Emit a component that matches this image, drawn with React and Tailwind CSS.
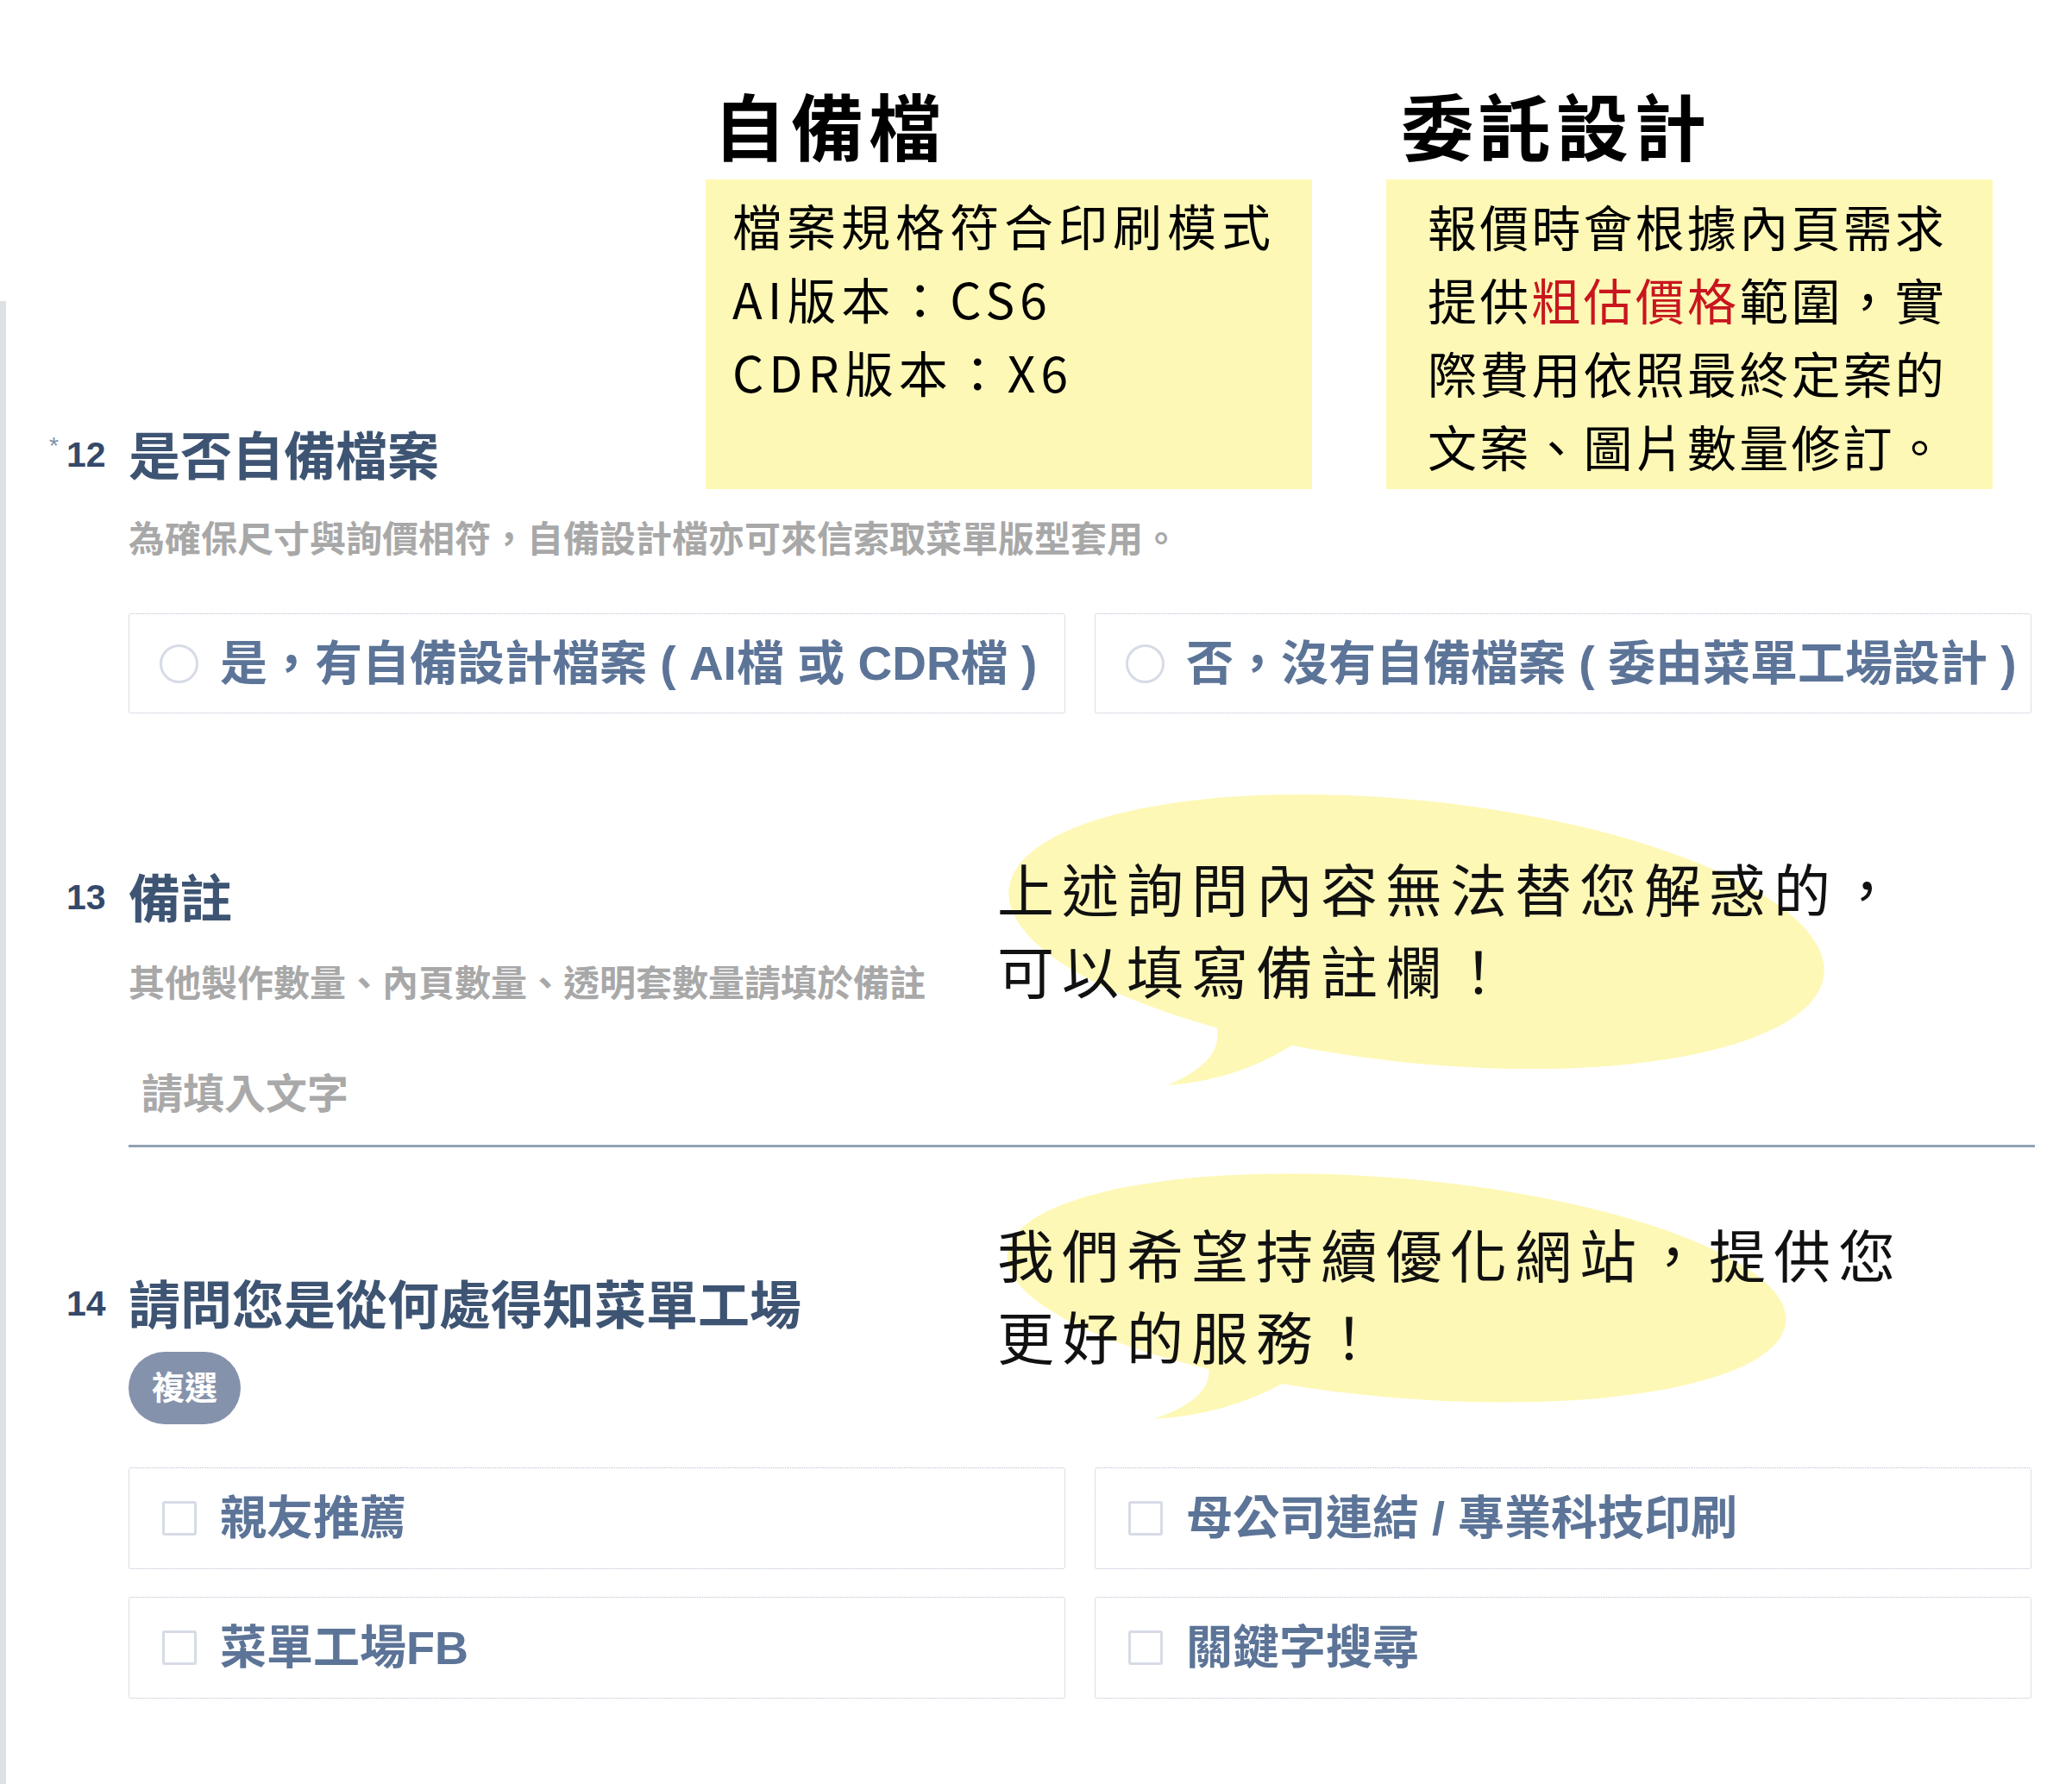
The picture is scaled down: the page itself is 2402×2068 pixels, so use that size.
import React from "react";

const formFont = "font-['Liberation_Sans','Noto_Sans_CJK_TC',sans-serif]";
const noteFont = "font-['Noto_Sans_CJK_TC','Noto_Sans_CJK_JP',sans-serif]";

function NumberCol({ n, required }) {
  return (
    <div className="w-[142px] shrink-0 flex items-start pl-[50px]">
      <span className="w-[20px] text-[28px] leading-[28px] mt-[2px] text-[#7f8fa8] font-['Liberation_Sans',sans-serif]">
        {required ? "*" : ""}
      </span>
      <span className="text-[41px] leading-[52px] font-bold text-[#34496a] font-['Liberation_Sans',sans-serif]">
        {n}
      </span>
    </div>
  );
}

function Title({ children }) {
  return (
    <div className="text-[60px] leading-[60px] font-bold text-[#3e5473] whitespace-nowrap">
      {children}
    </div>
  );
}

function Sub({ children, className = "" }) {
  return (
    <div className={"text-[42px] leading-[42px] font-bold text-[#a8a8a8] whitespace-nowrap " + className}>
      {children}
    </div>
  );
}

function RadioOpt({ children }) {
  return (
    <div className="h-[116px] flex items-center pl-[35px] border border-dotted border-[#b7bfcf] rounded-[3px]">
      <span className="w-[45px] h-[45px] rounded-full border-[3px] border-[#d6dbe6] shrink-0" />
      <span className="ml-[25px] text-[55px] leading-none font-bold text-[#5c7497] whitespace-nowrap">
        {children}
      </span>
    </div>
  );
}

function CheckOpt({ children }) {
  return (
    <div className="h-[118px] flex items-center pl-[38px] border border-dotted border-[#b7bfcf] rounded-[3px]">
      <span className="w-[40px] h-[40px] rounded-[3px] border-[3px] border-[#d6dbe6] shrink-0" />
      <span className="ml-[27px] text-[54px] leading-none font-bold text-[#5c7497] whitespace-nowrap">
        {children}
      </span>
    </div>
  );
}

export default function App() {
  return (
    <div className="relative w-[2402px] h-[2068px] bg-white overflow-hidden">
      {/* Form */}
      <div className={"mt-[349px] h-[1719px] border-l-[7px] border-[#dce1e6] pt-[152px] " + formFont}>
        {/* Q12 */}
        <div className="flex">
          <NumberCol n="12" required />
          <div className="flex-1">
            <Title>是否自備檔案</Title>
            <Sub className="mt-[44px]">為確保尺寸與詢價相符，自備設計檔亦可來信索取菜單版型套用。</Sub>
            <div className="mt-[64px] w-[2206px] grid grid-cols-2 gap-x-[34px]">
              <RadioOpt>是，有自備設計檔案 ( AI檔 或 CDR檔 )</RadioOpt>
              <RadioOpt>否，沒有自備檔案 ( 委由菜單工場設計 )</RadioOpt>
            </div>
          </div>
        </div>

        {/* Q13 */}
        <div className="flex mt-[187px]">
          <NumberCol n="13" />
          <div className="flex-1">
            <Title>備註</Title>
            <Sub className="mt-[46px]">其他製作數量、內頁數量、透明套數量請填於備註</Sub>
            <div className="mt-[48px] w-[2210px] h-[120px] border-b-[3px] border-[#93a3b6] flex items-center pl-[15px]">
              <input
                readOnly
                placeholder="請填入文字"
                className="w-full bg-transparent outline-none text-[48px] leading-none font-bold text-[#555] placeholder:text-[#a9a9a9]"
              />
            </div>
          </div>
        </div>

        {/* Q14 */}
        <div className="flex mt-[155px]">
          <NumberCol n="14" />
          <div className="flex-1">
            <Title>請問您是從何處得知菜單工場</Title>
            <div className="mt-[22px] w-[130px] h-[84px] rounded-full bg-[#8592ab] flex items-center justify-center text-white text-[38px] font-bold leading-none">
              複選
            </div>
            <div className="mt-[50px] w-[2206px] grid grid-cols-2 gap-x-[34px] gap-y-[32px]">
              <CheckOpt>親友推薦</CheckOpt>
              <CheckOpt>母公司連結 / 專業科技印刷</CheckOpt>
              <CheckOpt>菜單工場FB</CheckOpt>
              <CheckOpt>關鍵字搜尋</CheckOpt>
            </div>
          </div>
        </div>
      </div>

      {/* Top annotation notes */}
      <div className={"absolute left-[818px] top-[102px] flex gap-[86px] text-black " + noteFont}>
        <div className="w-[703px]">
          <div className="pl-[9px] text-[84px] leading-[84px] font-bold tracking-[6px]">自備檔</div>
          <div className="mt-[22px] h-[359px] bg-[#fef8b6] pl-[31px] pt-[10px] text-[57px] leading-[85px] tracking-[6px] whitespace-nowrap">
            <div>檔案規格符合印刷模式</div>
            <div>AI版本：CS6</div>
            <div>CDR版本：X6</div>
          </div>
        </div>
        <div className="w-[703px]">
          <div className="pl-[17px] text-[84px] leading-[84px] font-bold tracking-[6px]">委託設計</div>
          <div className="mt-[22px] h-[359px] bg-[#fef8b6] pl-[48px] pt-[11px] text-[57px] leading-[85px] tracking-[3.2px] whitespace-nowrap">
            <div>報價時會根據內頁需求</div>
            <div>
              提供<span className="text-[#c8161e]">粗估價格</span>範圍，實
            </div>
            <div>際費用依照最終定案的</div>
            <div>文案、圖片數量修訂。</div>
          </div>
        </div>
      </div>

      {/* Speech bubble 1 */}
      <svg className="absolute left-[1150px] top-[910px]" width="1000" height="360" viewBox="0 0 1000 360">
        <ellipse cx="492" cy="170" rx="475" ry="152" transform="rotate(6 492 170)" fill="#fef8b6" />
        <path d="M 258 272 Q 276 318 203 348 Q 292 342 362 292 Z" fill="#fef8b6" />
      </svg>
      <div className={"absolute left-[1156px] top-[981px] text-[66px] leading-[95px] tracking-[9px] text-[#111] whitespace-nowrap " + noteFont}>
        <div>上述詢問內容無法替您解惑的，</div>
        <div>可以填寫備註欄！</div>
      </div>

      {/* Speech bubble 2 */}
      <svg className="absolute left-[1150px] top-[1340px]" width="1000" height="330" viewBox="0 0 1000 330">
        <ellipse cx="469" cy="153" rx="453" ry="127" transform="rotate(5 469 153)" fill="#fef8b6" />
        <path d="M 250 238 Q 262 280 187 305 Q 272 300 340 262 Z" fill="#fef8b6" />
      </svg>
      <div className={"absolute left-[1156px] top-[1405px] text-[66px] leading-[95px] tracking-[9px] text-[#111] whitespace-nowrap " + noteFont}>
        <div>我們希望持續優化網站，提供您</div>
        <div>更好的服務！</div>
      </div>
    </div>
  );
}
